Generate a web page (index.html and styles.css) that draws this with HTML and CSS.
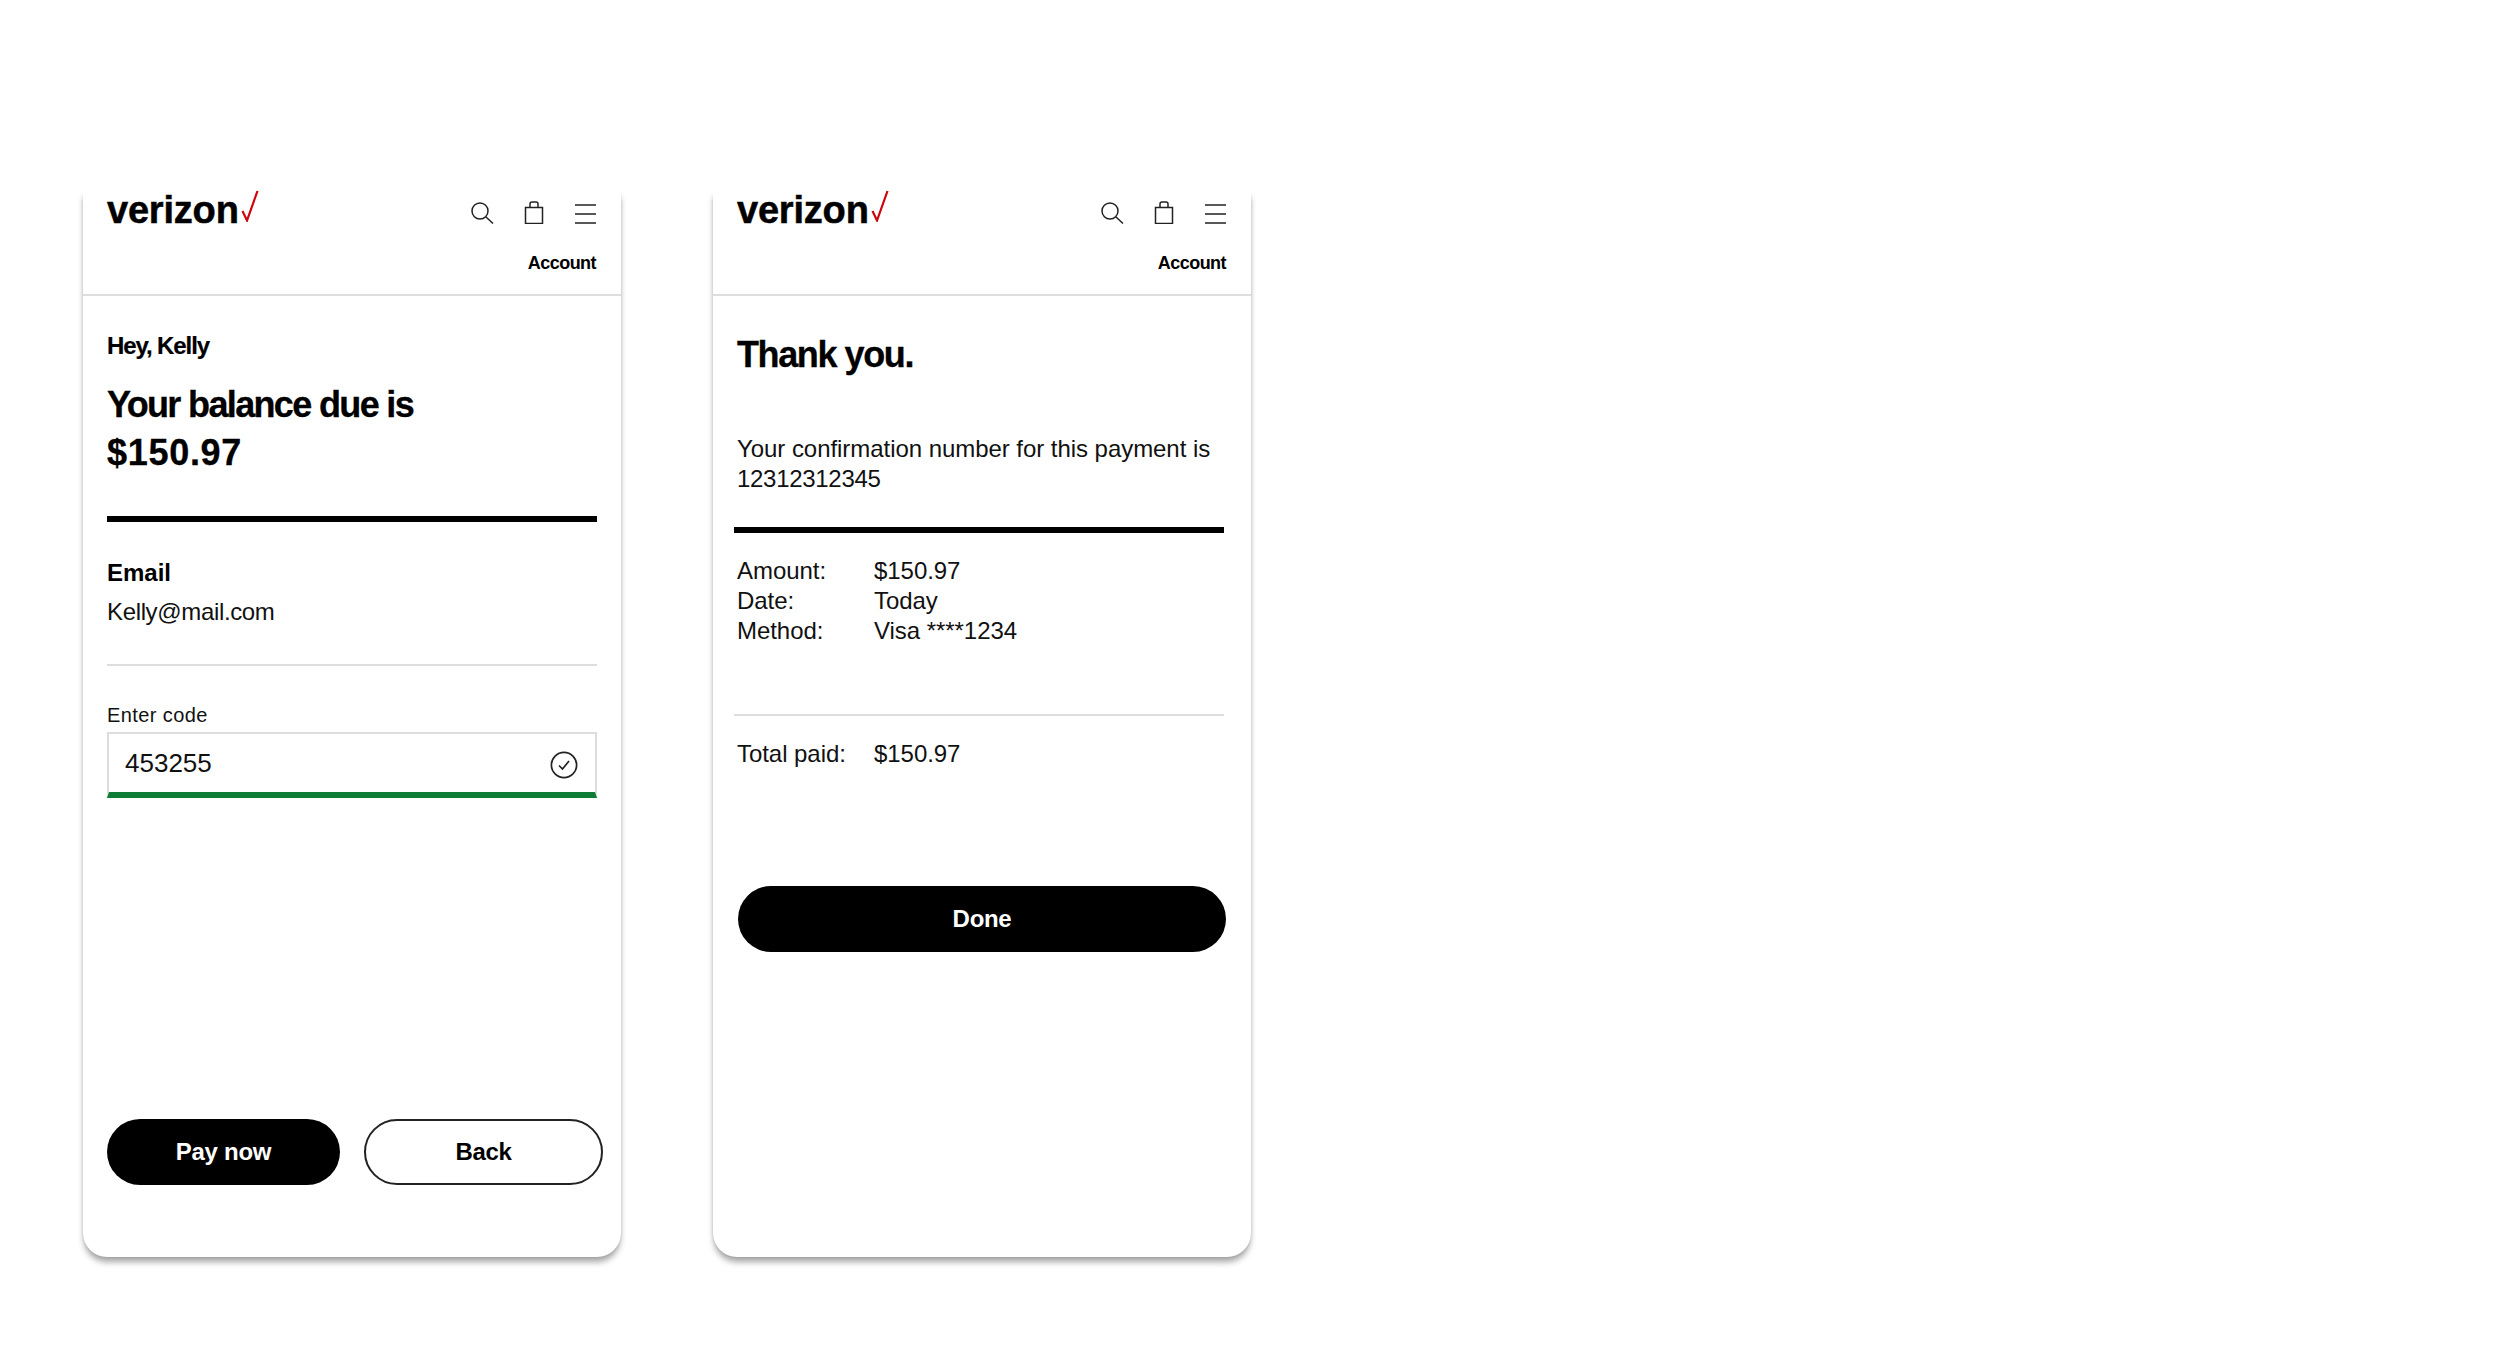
FILE: index.html
```html
<!doctype html>
<html lang="en">
  <head>
    <meta charset="UTF-8" />
    <title>Verizon payment</title>
    <link rel="stylesheet" href="styles.css">
  </head>

  <body>
    <section class="phone">
      <header class="site-header">
        <div class="header-row">
          <a class="logo">verizon<svg class="logo-check" viewBox="0 0 18 32"><path d="M1.5 21 6 30.5 16.5 1" /></svg></a>
          <nav class="header-icons">
            <svg viewBox="0 0 24 24"><circle cx="9" cy="11" r="8" /><path d="M15 17l7 6.5" /></svg>
            <svg viewBox="0 0 24 24"><path d="M3.5 7.5h17v16h-17zM8 7.5V4q0-2 2-2h4q2 0 2 2v3.5" /></svg>
            <svg viewBox="0 0 24 24"><path d="M2 5h21M2 14h21M2 23h21" /></svg>
          </nav>
        </div>
        <a class="account-link">Account</a>
      </header>
      <main class="content">
        <p class="greeting">Hey, Kelly</p>
        <h1 class="balance">Your balance due is<br /><span class="balance-amount">$150.97</span></h1>
        <hr class="rule-thick" />
        <p class="field-title">Email</p>
        <p class="field-value">Kelly@mail.com</p>
        <hr class="rule-thin" />
        <label class="input-label" for="code">Enter code</label>
        <div class="input-box">
          <span id="code" class="input-value">453255</span>
          <svg class="input-check" viewBox="0 0 28 28"><circle cx="14" cy="14" r="12.6" /><path d="M9 14.5l3.5 3.5 6.5-8" /></svg>
        </div>
        <div class="button-row">
          <button class="btn btn-primary">Pay now</button>
          <button class="btn btn-outline">Back</button>
        </div>
      </main>
    </section>

    <section class="phone">
      <header class="site-header">
        <div class="header-row">
          <a class="logo">verizon<svg class="logo-check" viewBox="0 0 18 32"><path d="M1.5 21 6 30.5 16.5 1" /></svg></a>
          <nav class="header-icons">
            <svg viewBox="0 0 24 24"><circle cx="9" cy="11" r="8" /><path d="M15 17l7 6.5" /></svg>
            <svg viewBox="0 0 24 24"><path d="M3.5 7.5h17v16h-17zM8 7.5V4q0-2 2-2h4q2 0 2 2v3.5" /></svg>
            <svg viewBox="0 0 24 24"><path d="M2 5h21M2 14h21M2 23h21" /></svg>
          </nav>
        </div>
        <a class="account-link">Account</a>
      </header>
      <main class="content content-thanks">
        <h1 class="thanks">Thank you.</h1>
        <p class="confirmation">Your confirmation number for this payment is <span class="confirmation-number">12312312345</span></p>
        <hr class="rule-thick rule-wide" />
        <dl class="summary">
          <dt>Amount:</dt><dd>$150.97</dd>
          <dt>Date:</dt><dd>Today</dd>
          <dt>Method:</dt><dd>Visa ****1234</dd>
        </dl>
        <hr class="rule-thin rule-wide" />
        <dl class="summary summary-total">
          <dt>Total paid:</dt><dd>$150.97</dd>
        </dl>
        <button class="btn btn-primary btn-done">Done</button>
      </main>
    </section>
  </body>
</html>
```

FILE: styles.css
```css
body {
  box-sizing: border-box;
  min-height: 100vh;
  margin: 0;
  padding: 188px 0 0 83px;
  display: flex;
  align-items: flex-start;
  gap: 92px;
  background: white;
  color: #111;
  font-family: "Liberation Sans", Arial, sans-serif;
}

p,
h1,
dl,
dd,
hr {
  margin: 0;
}

.phone {
  position: relative;
  width: 538px;
  height: 1069px;
  display: flex;
  flex-direction: column;
  background: white;
  border-radius: 0 0 24px 24px;
  box-shadow: 0 6px 6px -1px rgba(0, 0, 0, 0.35), 0 0 3px rgba(0, 0, 0, 0.12);
}

/* fades the shadow out along the top edge */
.phone::before {
  content: "";
  position: absolute;
  top: -8px;
  left: -8px;
  right: -8px;
  height: 22px;
  background: linear-gradient(white 50%, rgba(255, 255, 255, 0));
}

.site-header {
  position: relative;
  height: 106px;
  padding: 0 24px;
  border-bottom: 2px solid #ddd;
}

.header-row {
  display: flex;
  justify-content: space-between;
  align-items: flex-start;
}

.logo {
  display: flex;
  align-items: flex-start;
  font-size: 38px;
  line-height: 44px;
  font-weight: bold;
  letter-spacing: -0.2px;
  color: #000;
  -webkit-text-stroke: 0.5px #000;
}

.logo-check {
  width: 18px;
  height: 32px;
  margin: 2px 0 0 2px;
  fill: none;
  stroke: #cd040b;
  stroke-width: 2.2;
}

.header-icons {
  display: flex;
  gap: 27px;
  margin-top: 12px;
}

.header-icons svg {
  width: 24px;
  height: 24px;
  fill: none;
  stroke: #222;
  stroke-width: 1.5;
}

.account-link {
  display: block;
  margin: 20px 1px 0 0;
  text-align: right;
  font-size: 18px;
  line-height: 22px;
  font-weight: bold;
  letter-spacing: -0.55px;
  color: #000;
}

.content {
  flex: 1;
  display: flex;
  flex-direction: column;
  padding: 35px 24px 72px;
}

.greeting {
  font-size: 24px;
  line-height: 30px;
  font-weight: bold;
  letter-spacing: -1.1px;
  color: #000;
  -webkit-text-stroke: 0.2px #000;
}

.balance,
.thanks {
  font-size: 36px;
  line-height: 48px;
  font-weight: bold;
  letter-spacing: -1.65px;
  color: #000;
  -webkit-text-stroke: 0.3px #000;
}

.balance {
  margin-top: 20px;
}

.balance-amount {
  letter-spacing: 0.7px;
}

.thanks {
  letter-spacing: -1.4px;
}

.rule-thick {
  height: 6px;
  margin-top: 39px;
  border: 0;
  background: black;
}

.rule-thin {
  height: 2px;
  margin-top: 37px;
  border: 0;
  background: #ddd;
}

.rule-wide {
  margin-left: -3px;
  margin-right: 3px;
}

.field-title {
  margin-top: 36px;
  font-size: 24px;
  line-height: 30px;
  font-weight: bold;
  color: #000;
}

.field-value {
  margin-top: 9px;
  font-size: 24px;
  line-height: 30px;
  letter-spacing: -0.35px;
}

.input-label {
  margin-top: 37px;
  font-size: 20px;
  line-height: 24px;
  letter-spacing: 0.4px;
}

.input-box {
  height: 58px;
  margin-top: 5px;
  padding: 0 17px 0 16px;
  display: flex;
  align-items: center;
  justify-content: space-between;
  border: 2px solid #ddd;
  border-bottom: 6px solid #0f7d36;
}

.input-value {
  font-size: 26px;
  line-height: 30px;
}

.input-check {
  width: 28px;
  height: 28px;
  margin-top: 4px;
  fill: none;
  stroke: #222;
  stroke-width: 1.7;
}

.button-row {
  display: grid;
  grid-template-columns: 233px 239px;
  gap: 24px;
  margin-top: auto;
}

.btn {
  height: 66px;
  padding: 0;
  border-radius: 33px;
  font-family: inherit;
  font-size: 24px;
  font-weight: bold;
  letter-spacing: -0.3px;
}

.btn-primary {
  border: 0;
  background: black;
  color: white;
}

.btn-outline {
  border: 2px solid #222;
  background: white;
  color: black;
}

.btn-done {
  width: 488px;
  margin: 117px 0 0 1px;
}

.confirmation {
  margin-top: 55px;
  font-size: 24px;
  line-height: 30px;
  letter-spacing: -0.05px;
}

.confirmation-number {
  letter-spacing: -0.3px;
}

.content-thanks .rule-thick {
  margin-top: 33px;
}

.summary {
  display: grid;
  grid-template-columns: 137px 1fr;
  margin-top: 23px;
  font-size: 24px;
  line-height: 30px;
  letter-spacing: -0.05px;
}

.content-thanks .rule-thin {
  margin-top: 68px;
}
```
